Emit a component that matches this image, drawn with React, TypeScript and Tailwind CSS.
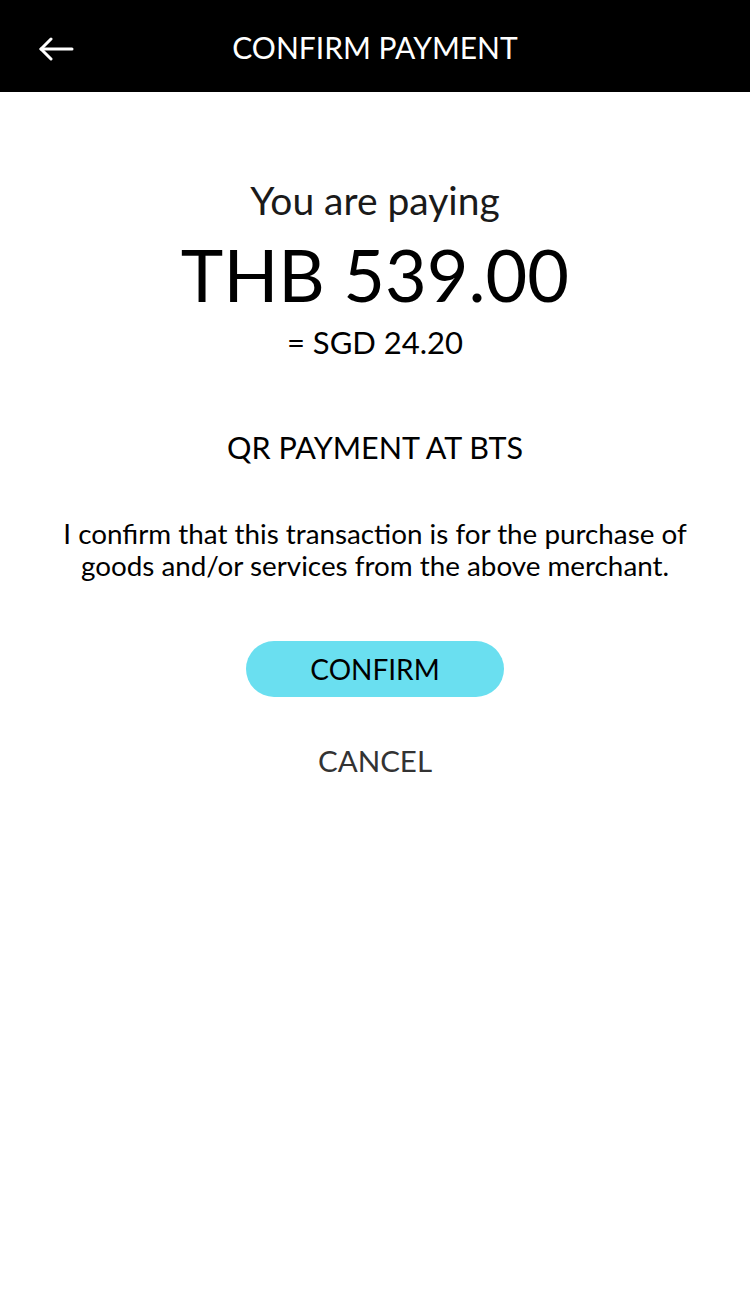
import { FC } from "react";

const BackArrow: FC = () => (
  <svg width="36" height="24" viewBox="0 0 36 24" fill="none" stroke="white" strokeWidth="3" strokeLinecap="round" strokeLinejoin="round">
    <path d="M34 12H3" />
    <path d="M13 2L3 12l10 10" />
  </svg>
);

const App: FC = () => {
  return (
    <div className="min-h-[1298px] w-[750px] bg-white font-['Lato','Noto_Sans',sans-serif] text-black">
      <header className="relative flex h-[92px] items-center justify-center bg-black">
        <button className="absolute left-[38px] top-[37px]">
          <BackArrow />
        </button>
        <h1 className="pt-[2px] text-[30px] text-white">CONFIRM PAYMENT</h1>
      </header>

      <main className="flex flex-col items-center text-center">
        <div className="mt-[84px] text-[39px] leading-[48px] text-[#1a1a1a]">You are paying</div>
        <div className="mt-[10px] text-[72px] leading-[80px]">THB 539.00</div>
        <div className="mt-[8px] text-[31px] leading-[40px]">= SGD 24.20</div>

        <div className="mt-[65px] text-[30.5px] leading-[40px]">QR PAYMENT AT BTS</div>

        <p className="mt-[51px] text-[27.8px] leading-[32px]">
          I confirm that this transaction is for the purchase of
          <br />
          goods and/or services from the above merchant.
        </p>

        <button className="mt-[59px] flex h-[56px] w-[258px] items-center justify-center rounded-full bg-[#6adff0] text-[28px]">
          CONFIRM
        </button>
        <button className="mt-[44px] text-[29.5px] leading-[40px] text-[#333]">CANCEL</button>
      </main>
    </div>
  );
};

export default App;
